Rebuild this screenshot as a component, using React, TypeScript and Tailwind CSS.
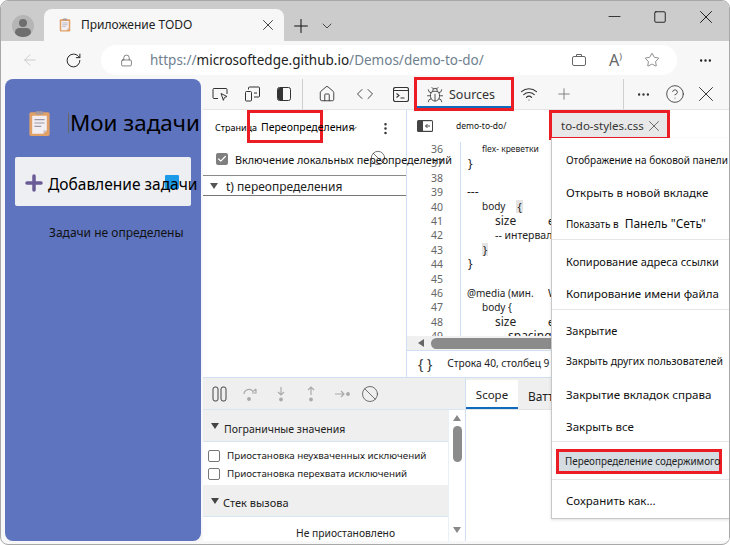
import {
  ArrowLeft,
  Ban,
  Bug,
  Check,
  ChevronDown,
  CircleHelp,
  Code,
  Ellipsis,
  EllipsisVertical,
  House,
  Lock,
  Minus,
  Plus,
  RotateCw,
  Square,
  Star,
  Wifi,
  X,
} from "lucide-react";

const FONT = "font-['Noto_Sans','Open_Sans',sans-serif]";

function Clipboard({ size }: { size: number }) {
  return (
    <svg width={size} height={size} viewBox="0 0 24 24" className="shrink-0">
      <rect x="3" y="2" width="18" height="21" rx="1.5" fill="#e0a066" />
      <path d="M5.5 5h13v13l-3 3h-10z" fill="#f3eef2" />
      <path d="M15.5 21v-3h3z" fill="#c9c3cc" />
      <rect x="8.5" y="1" width="7" height="3" rx="1" fill="#a89a9a" />
      <path d="M7.5 8.5h9M7.5 11.5h9M7.5 14.5h6" stroke="#9b97a5" strokeWidth="1" />
    </svg>
  );
}

function TabStrip() {
  return (
    <div className="flex h-[40px] shrink-0 bg-[#cccccc]">
      <div className="flex w-[43px] items-end justify-center pb-[4px]">
        <div className="flex h-[22px] w-[22px] flex-col items-center overflow-hidden rounded-full bg-[#b5b5b5]">
          <div className="mt-[4px] h-[8px] w-[8px] rounded-full bg-[#6e6e6e]" />
          <div className="mt-[1px] h-[10px] w-[16px] rounded-full bg-[#6e6e6e]" />
        </div>
      </div>
      <div className="mt-[8px] flex h-[32px] w-[240px] items-center rounded-t-[8px] bg-[#f7f7f7] pl-[14px] pr-[7px]">
        <Clipboard size={14} />
        <span className="ml-[9px] flex-1 text-[12px] text-[#222]">Приложение TODO</span>
        <X size={18} strokeWidth={1.1} className="text-[#222]" />
      </div>
      <div className="flex flex-1 items-center">
        <Plus size={22} strokeWidth={1.1} className="ml-[6px] mt-[9px] shrink-0 text-[#111]" />
        <ChevronDown size={16} strokeWidth={1.3} className="ml-[7px] mt-[9px] shrink-0 text-[#333]" />
        <Minus size={19} strokeWidth={1} className="ml-[270px] mt-[-9px] shrink-0 text-[#111]" />
        <Square size={14} strokeWidth={1.5} className="ml-[29px] mt-[-9px] shrink-0 text-[#111]" />
        <X size={22} strokeWidth={1} className="ml-[28px] mt-[-9px] shrink-0 text-[#111]" />
      </div>
    </div>
  );
}

function AddressBar() {
  return (
    <div className="flex h-[38px] shrink-0 items-center bg-[#f7f7f7]">
      <ArrowLeft size={18} strokeWidth={1} className="ml-[20px] text-[#bdbdbd]" />
      <RotateCw size={17} strokeWidth={1.4} className="ml-[26px] text-[#222]" />
      <div className="ml-[19px] flex h-[30px] w-[576px] items-center rounded-full bg-white">
        <Lock size={13} strokeWidth={1.2} className="ml-[19px] text-[#444]" />
        <span className="ml-[17px] text-[13.5px] text-[#6f7f8f]">
          https://<span className="text-[#222]">microsoftedge.github.io</span>/Demos/demo-to-do/
        </span>
        <div className="ml-auto flex items-center">
          <svg width="16" height="14" viewBox="0 0 16 14" fill="none" stroke="#666" strokeWidth="1">
            <rect x="1.5" y="3.5" width="13" height="9" rx="1.5" />
            <path d="M5.5 3.5V1.5h5v2" />
          </svg>
          <span className="ml-[22px] text-[16px] leading-none text-[#666]">
            A<span className="align-super text-[9px]">)</span>
          </span>
          <Star size={16} strokeWidth={1} className="ml-[22px] mr-[17px] text-[#555]" />
        </div>
      </div>
      <Ellipsis size={15} strokeWidth={1.8} className="ml-[21px] text-[#222]" />
    </div>
  );
}

function TodoPage() {
  return (
    <div className="flex w-[196px] shrink-0 flex-col rounded-[8px] bg-[#5e74bf]">
      <div className="mt-[27px] flex h-[34px] items-center pl-[21px]">
        <Clipboard size={27} />
        <span className="relative z-10 ml-[15px] whitespace-nowrap border-l border-[#666] pl-[1px] text-[22.4px] leading-[20px] text-black">
          Мои задачи
        </span>
      </div>
      <div className="relative ml-[10px] mt-[17px] flex h-[49px] w-[176px] items-center rounded-[2px] bg-[#eeeff3] pl-[7px]">
        <span className="absolute left-[150px] top-[18px] h-[14px] w-[14px] rounded-[1px] bg-[#1e9be8]" />
        <Plus size={24} strokeWidth={3.5} className="mt-[3px] shrink-0 text-[#6a5a96]" />
        <span className="relative z-10 ml-[2px] mt-[6px] whitespace-nowrap text-[15.5px] text-black">
          Добавление задачи
        </span>
      </div>
      <div className="ml-[44px] mt-[18px] text-[12px] text-[#111]">Задачи не определены</div>
    </div>
  );
}

function DevToolsBar() {
  return (
    <div className="flex h-[31px] shrink-0 items-center border-b border-[#e4e4e4] bg-[#f7f7f7] text-[#333]">
      <svg width="17" height="15" viewBox="0 0 17 15" fill="none" stroke="#333" strokeWidth="1" className="ml-[9px]">
        <path d="M6 11.5H2a1 1 0 0 1-1-1v-8a1 1 0 0 1 1-1h12a1 1 0 0 1 1 1V7" />
        <path d="M9 6.5l6 3-2.6 1-1 2.8z" />
      </svg>
      <svg width="17" height="16" viewBox="0 0 17 16" fill="none" stroke="#333" strokeWidth="1" className="ml-[15px]">
        <rect x="1.5" y="5.5" width="6" height="9.5" rx="1" />
        <path d="M4.5 3.5V2a1 1 0 0 1 1-1h9a1 1 0 0 1 1 1v8a1 1 0 0 1-1 1H10M10 7h3" />
      </svg>
      <svg width="14" height="14" viewBox="0 0 14 14" className="ml-[16px]">
        <rect x="0.5" y="0.5" width="13" height="13" rx="2" fill="none" stroke="#333" />
        <path d="M1 2.5a1.5 1.5 0 0 1 1.5-1.5H6v12H2.5A1.5 1.5 0 0 1 1 11.5z" fill="#333" />
      </svg>
      <div className="ml-[11px] h-[30px] w-px bg-[#cfcfcf]" />
      <House size={18} strokeWidth={1.2} className="ml-[15px]" />
      <Code size={18} strokeWidth={1.2} className="ml-[20px]" />
      <svg width="16" height="15" viewBox="0 0 16 15" fill="none" stroke="#333" strokeWidth="1.1" className="ml-[19px]">
        <rect x="0.5" y="0.5" width="15" height="14" rx="2" />
        <path d="M0.5 3.5h15M3.5 6.5l2.5 2-2.5 2M7.5 11h4" />
      </svg>
      <div className="relative z-10 ml-[5px] flex h-[34px] w-[100px] shrink-0 items-center border-[3px] border-[#ec1c24] bg-[#f7f7f7] pl-[9px] pt-[2px]">
        <Bug size={18} strokeWidth={1.1} className="shrink-0" />
        <span className="ml-[5px] text-[12.5px]">Sources</span>
        <span className="absolute bottom-0 left-0 h-[2px] w-full bg-[#0f6cbd]" />
      </div>
      <Wifi size={18} strokeWidth={1.5} className="ml-[6px] shrink-0" />
      <Plus size={18} strokeWidth={1.2} className="ml-[17px] shrink-0 text-[#777]" />
      <div className="ml-[50px] h-[30px] w-px bg-[#cfcfcf]" />
      <Ellipsis size={15} strokeWidth={1.8} className="ml-[12px] shrink-0" />
      <CircleHelp size={20} strokeWidth={1} className="ml-[14px] shrink-0" />
      <X size={26} strokeWidth={0.9} className="ml-[8px] shrink-0" />
    </div>
  );
}

function OverridesPanel() {
  return (
    <div className="flex w-[204px] shrink-0 flex-col border-r border-[#cfe0f3] bg-white">
      <div className="flex h-[33px] items-center pl-[12px]">
        <span className="w-[32px] whitespace-nowrap pt-[3px] text-[9px]">Страница</span>
        <div className="flex h-[33px] w-[76px] shrink-0 items-center border-[3px] border-[#ec1c24] pt-[3px]">
          <span className="ml-[11px] whitespace-nowrap text-[10.5px]">Переопределения</span>
        </div>
        <ChevronDown size={11} className="ml-[25px] mt-[3px] shrink-0 text-[#444]" />
        <EllipsisVertical size={15} className="ml-[19px] mt-[3px] shrink-0 text-[#333]" />
      </div>
      <div className="relative flex h-[33px] items-center border-b border-[#8a8a8a] pl-[13px]">
        <span className="flex h-[12px] w-[12px] shrink-0 items-center justify-center rounded-[2px] bg-[#7f7f7f]">
          <Check size={10} strokeWidth={3} className="text-white" />
        </span>
        <span className="relative z-10 ml-[7px] whitespace-nowrap pt-[2px] text-[10.8px] text-[#111]">
          Включение локальных переопределений
        </span>
        <Ban size={16} strokeWidth={1} className="absolute left-[167px] top-[7px] text-[#333]" />
      </div>
      <div className="flex h-[20px] items-center border-b border-[#777] pl-[7px]">
        <span className="h-0 w-0 border-x-[4px] border-t-[6px] border-x-transparent border-t-[#555]" />
        <span className="ml-[8px] pt-[2px] text-[12px] text-[#222]">t) переопределения</span>
      </div>
    </div>
  );
}

type CodeLine = { n: number; indent: string; text: string; size?: string; mark?: string; tail?: string };

const CODE_LINES: CodeLine[] = [
  { n: 36, indent: "ml-[15px]", text: "flex- креветки", size: "text-[8.5px]" },
  { n: 37, indent: "ml-[1px]", text: "}" },
  { n: 38, indent: "", text: "" },
  { n: 39, indent: "", text: "---" },
  { n: 40, indent: "ml-[15px]", text: "body", size: "text-[10px]", mark: "{" },
  { n: 41, indent: "ml-[28px]", text: "size", tail: "е" },
  { n: 42, indent: "ml-[28px]", text: "-- интервал", size: "text-[10.5px]" },
  { n: 43, indent: "ml-[15px]", text: "", mark: "}" },
  { n: 44, indent: "ml-[1px]", text: "}" },
  { n: 45, indent: "", text: "" },
  { n: 46, indent: "", text: "@media (мин.", size: "text-[10px]", tail: "W" },
  { n: 47, indent: "ml-[15px]", text: "body {", size: "text-[10px]" },
  { n: 48, indent: "ml-[28px]", text: "size", tail: "е" },
  { n: 49, indent: "ml-[41px]", text: "spacing" },
];

function CodeEditor() {
  return (
    <div className="flex min-w-0 flex-1 flex-col bg-white">
      <div className="flex h-[29px] shrink-0 items-center">
        <svg width="16" height="12" viewBox="0 0 16 12" className="ml-[10px] mt-[3px] shrink-0">
          <rect x="0" y="0" width="16" height="12" rx="1.5" fill="#444" />
          <rect x="6" y="1.2" width="9" height="9.6" fill="#fff" />
          <path d="M13 6H8.5M10.5 4L8.5 6l2 2" stroke="#444" fill="none" />
        </svg>
        <span className="ml-[23px] mt-[4px] w-[93px] shrink-0 text-[8.5px] text-[#111]">demo-to-do/</span>
        <div className="flex h-[30px] w-[121px] shrink-0 items-center border-[3px] border-[#ec1c24] bg-[#e8e8e8] pl-[9px] pt-[3px]">
          <span className="whitespace-nowrap text-[11.5px] text-[#333]">to-do-styles.css</span>
          <X size={18} strokeWidth={1} className="ml-[1px] shrink-0 text-[#444]" />
        </div>
      </div>
      <div className="flex h-[197px] shrink-0 overflow-hidden pt-[3px]">
        <div className="h-[220px] w-[54px] shrink-0 border-r border-[#cfe0f3] pr-[17px] text-right">
          {CODE_LINES.map(({ n }) => (
            <div key={n} className="h-[14.4px] text-[10.5px] leading-[14.4px] text-[#666]">
              {n}
            </div>
          ))}
        </div>
        <div className="w-[90px] shrink-0 overflow-hidden pl-[6px]">
          {CODE_LINES.map(({ n, indent, text, size, mark, tail }) => (
            <div key={n} className="flex h-[14.4px] items-center whitespace-nowrap text-[12px] text-[#222]">
              {text && <span className={`${indent} ${size ?? ""}`}>{text}</span>}
              {mark && (
                <span className={`${text ? "ml-[11px]" : indent} bg-[#e4e4e4] px-[1px] text-[11px] leading-[13px]`}>
                  {mark}
                </span>
              )}
              {tail && <span className="absolute left-[547px] text-[11px]">{tail}</span>}
            </div>
          ))}
        </div>
      </div>
      <div className="flex h-[14px] shrink-0 items-center bg-[#f0f0f0] pl-[11px]">
        <span className="h-0 w-0 border-y-[4px] border-r-[6px] border-y-transparent border-r-[#666]" />
        <span className="ml-[7px] h-[11px] w-[200px] rounded-full bg-[#8b8b8b]" />
      </div>
      <div className="flex h-[27px] shrink-0 items-center border-t border-[#cfe0f3]">
        <span className="ml-[11px] text-[14px] leading-none text-[#333]">{"{ }"}</span>
        <span className="ml-[15px] whitespace-nowrap text-[10.2px] text-[#222]">Строка 40, столбец 9</span>
      </div>
    </div>
  );
}

function Debugger() {
  return (
    <div className="flex w-[263px] shrink-0 flex-col border-r border-[#cfe0f3]">
      <div className="flex h-[32px] shrink-0 items-center border-b border-[#d7e5f5] bg-[#efefef] pl-[9px] text-[#b0b0b0]">
        <svg width="15" height="16" viewBox="0 0 15 16" fill="none" stroke="#444" strokeWidth="1">
          <rect x="1" y="1" width="5" height="14" rx="2" />
          <rect x="9" y="1" width="5" height="14" rx="2" />
        </svg>
        <svg width="16" height="16" viewBox="0 0 16 16" fill="none" stroke="#aaa" strokeWidth="1.2" className="ml-[15px]">
          <path d="M2 8a5 5 0 0 1 9-2.5L14 3M14 3v4h-4" />
          <circle cx="7" cy="13" r="1.3" fill="#aaa" />
        </svg>
        <svg width="16" height="16" viewBox="0 0 16 16" fill="none" stroke="#aaa" strokeWidth="1.2" className="ml-[15px]">
          <path d="M8 1v8M5 6l3 3 3-3" />
          <circle cx="8" cy="13.5" r="1.3" fill="#aaa" />
        </svg>
        <svg width="16" height="16" viewBox="0 0 16 16" fill="none" stroke="#aaa" strokeWidth="1.2" className="ml-[14px]">
          <path d="M8 9V1M5 4l3-3 3 3" />
          <circle cx="8" cy="13.5" r="1.3" fill="#aaa" />
        </svg>
        <svg width="16" height="16" viewBox="0 0 16 16" fill="none" stroke="#aaa" strokeWidth="1.2" className="ml-[15px]">
          <path d="M1 8h9M7 5l3 3-3 3" />
          <circle cx="14" cy="8" r="1.3" fill="#aaa" />
        </svg>
        <Ban size={18} strokeWidth={1} className="ml-[11px] text-[#444]" />
      </div>
      <div className="flex min-h-0 flex-1">
        <div className="min-w-0 flex-1 overflow-hidden">
          <div className="flex h-[32px] items-center border-b border-[#d7e5f5] bg-[#efefef] pl-[8px]">
            <span className="mt-[1px] h-0 w-0 border-x-[4px] border-t-[6px] border-x-transparent border-t-[#444]" />
            <span className="ml-[5px] pt-[8px] text-[10.5px] text-[#222]">Пограничные значения</span>
          </div>
          <div className="flex h-[43px] flex-col justify-center gap-[6px] pl-[5px] pt-[3px]">
            {["Приостановка неухваченных исключений", "Приостановка перехвата исключений"].map((label) => (
              <div key={label} className="flex h-[12px] items-center">
                <span className="h-[12px] w-[12px] shrink-0 rounded-[2px] border border-[#777]" />
                <span className="ml-[7px] whitespace-nowrap text-[9.8px] text-[#222]">{label}</span>
              </div>
            ))}
          </div>
          <div className="flex h-[32px] items-center border-b border-[#d7e5f5] bg-[#efefef] pl-[8px]">
            <span className="h-0 w-0 border-x-[4px] border-t-[6px] border-x-transparent border-t-[#444]" />
            <span className="ml-[4px] pt-[6px] text-[11px] text-[#222]">Стек вызова</span>
          </div>
          <div className="mt-[9px] whitespace-nowrap pl-[93px] text-[10.3px] text-[#222]">Не приостановлено</div>
        </div>
        <div className="flex w-[17px] shrink-0 flex-col items-center border-l border-[#e8f0f8] pt-[5px]">
          <span className="h-0 w-0 border-x-[4px] border-b-[6px] border-x-transparent border-b-[#888]" />
          <span className="mt-[5px] h-[36px] w-[9px] rounded-full bg-[#8b8b8b]" />
          <span className="mb-[8px] mt-auto h-0 w-0 border-x-[4px] border-t-[6px] border-x-transparent border-t-[#888]" />
        </div>
      </div>
    </div>
  );
}

function ScopePanel() {
  return (
    <div className="flex min-w-0 flex-1 flex-col bg-white">
      <div className="flex h-[32px] shrink-0 border-b border-[#e4e4e4] bg-[#efefef] pt-[2px]">
        <div className="flex h-[29px] w-[52px] items-center justify-center border-b-[2px] border-[#0f6cbd] bg-white pt-[2px] text-[11.5px] text-[#222]">
          Scope
        </div>
        <span className="ml-[10px] mt-[8px] text-[12px] text-[#222]">Ватт</span>
      </div>
    </div>
  );
}

function MenuRow({ label, height, size, extra, divider }: { label: string; height: string; size: string; extra?: string; divider?: boolean }) {
  return (
    <div className={`flex ${height} items-center ${divider ? "border-b border-[#e6e6e6]" : ""}`}>
      <span className={`ml-[14px] whitespace-nowrap ${size} text-[#111]`}>{label}</span>
      {extra && <span className="ml-[6px] whitespace-nowrap text-[12px] text-[#111]">{extra}</span>}
    </div>
  );
}

function ContextMenu() {
  return (
    <div className="absolute left-[550px] top-[137px] z-20 h-[381px] w-[179px] border-b border-l border-[#c8c8c8] bg-white pt-[5px] shadow-[0_1px_3px_rgba(0,0,0,0.12)]">
      <MenuRow label="Отображение на боковой панели" height="h-[34px]" size="text-[10px]" />
      <MenuRow label="Открыть в новой вкладке" height="h-[32px]" size="text-[11.5px]" />
      <MenuRow label="Показать в" extra={'Панель "Сеть"'} height="h-[31px] mb-[6px]" size="text-[10px]" divider />
      <MenuRow label="Копирование адреса ссылки" height="h-[32px]" size="text-[11px]" />
      <MenuRow label="Копирование имени файла" height="h-[32px] mb-[5px]" size="text-[11.5px]" divider />
      <MenuRow label="Закрытие" height="h-[32px]" size="text-[11px]" />
      <MenuRow label="Закрыть других пользователей" height="h-[29px]" size="text-[10.4px]" />
      <MenuRow label="Закрытие вкладок справа" height="h-[37px]" size="text-[11.6px]" />
      <MenuRow label="Закрыть все" height="h-[29px]" size="text-[11.5px]" divider />
      <div className="ml-[4px] mt-[7px] flex h-[25px] w-[166px] items-center border-[3px] border-[#ec1c24] bg-[#d5dde3]">
        <span className="ml-[6px] whitespace-nowrap text-[9.9px] text-[#222]">Переопределение содержимого</span>
      </div>
      <div className="mt-[5px] flex h-[38px] items-center border-t border-[#e6e6e6] pt-[4px]">
        <span className="ml-[14px] text-[11.5px] text-[#111]">Сохранить как...</span>
      </div>
    </div>
  );
}

export default function App() {
  return (
    <div className={`relative flex h-[545px] w-[730px] flex-col overflow-hidden rounded-[8px] border border-[#a8a8a8] bg-[#f7f7f7] ${FONT}`}>
      <TabStrip />
      <AddressBar />
      <div className="flex min-h-0 flex-1 pb-[3px] pl-[4px]">
        <TodoPage />
        <div className="ml-[2px] flex min-w-0 flex-1 flex-col bg-white">
          <DevToolsBar />
          <div className="flex h-[268px] shrink-0 border-b border-[#cfe0f3]">
            <OverridesPanel />
            <CodeEditor />
          </div>
          <div className="flex min-h-0 flex-1">
            <Debugger />
            <ScopePanel />
          </div>
        </div>
      </div>
      <ContextMenu />
    </div>
  );
}
